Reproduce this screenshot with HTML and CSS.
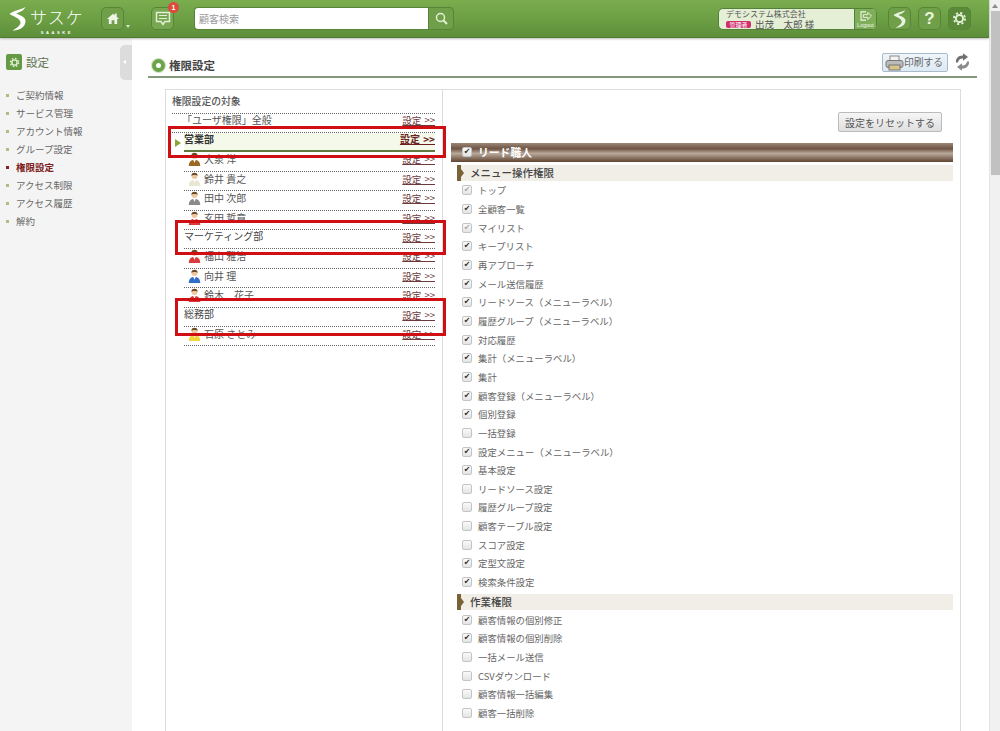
FILE: index.html
```html
<!DOCTYPE html>
<html lang="ja">
<head>
<meta charset="utf-8">
<title>権限設定</title>
<link rel="stylesheet" href="styles.css">
</head>
<body>
<svg class="defs" width="0" height="0" aria-hidden="true">
  <symbol id="person" viewBox="0 0 14 15">
    <path d="M.8 15c0-3.800 1.600-5.600 4.400-6.400h3.600c2.800.8 4.400 2.600 4.400 6.400z" fill="currentColor"/>
    <path d="M5.600 8.600h2.800L7 11.500z" fill="#fff"/>
    <circle cx="7" cy="4.300" r="3.200" fill="#f0c8a0"/>
    <path d="M3.700 4.400C3.500 1.900 5 .8 7 .8s3.500 1.100 3.300 3.600C9.500 2.900 5 2.800 3.700 4.400z" fill="#6b4a26"/>
  </symbol>
  <symbol id="mark-s" viewBox="0 0 17 24">
    <path d="M16.500 0C12 3 5 3 .5 7c4 2.500 10 4 11 8 .6 3-3.500 6-8 8.500C10 24 16.500 20 16.500 14c0-4-6-6-9.500-7.500C10.500 5 14.500 4 16.500 0z"/>
  </symbol>
  <symbol id="gear" viewBox="0 0 15 15">
    <circle cx="7.500" cy="7.500" r="3.600" fill="none" stroke="#e4f0d6" stroke-width="2"/>
    <circle cx="7.500" cy="7.500" r="5.600" fill="none" stroke="#e4f0d6" stroke-width="1.800" stroke-dasharray="2.200 2.200"/>
  </symbol>
</svg>
<div class="app">
  <div class="page">
    <header class="topbar">
      <div class="logo">
        <svg class="logo-mark" width="17" height="24"><use href="#mark-s"/></svg>
        <div class="logo-text"><span class="logo-kana">サスケ</span><span class="logo-latin">SAASKE</span></div>
      </div>
      <a class="tool tool-home">
        <svg width="14" height="13" viewBox="0 0 15 14"><path d="M1 7.500L7.500 2 9.500 3.400V1.500h2v3.700L14 7.500h-2V13H9V9H6v4H3V7.500z" fill="#eef4e6"/></svg>
      </a>
      <span class="caret"></span>
      <a class="tool tool-chat">
        <svg width="16" height="15" viewBox="0 0 16 15"><path d="M1.500 1.500h13v9H10L8 13.500 6 10.500H1.500z" fill="none" stroke="#e4f0d6" stroke-width="1.500"/><path d="M4 4.500h8M4 7.500h8" stroke="#e4f0d6" stroke-width="1.200"/></svg>
        <span class="badge">1</span>
      </a>
      <form class="search">
        <input class="search-input" type="text" placeholder="顧客検索">
        <button class="search-btn" type="button">
          <svg width="13" height="13" viewBox="0 0 13 13"><circle cx="5.500" cy="5.500" r="4" fill="none" stroke="#e4f0d6" stroke-width="1.500"/><path d="M8.500 8.500l3.500 3.500" stroke="#e4f0d6" stroke-width="2"/></svg>
        </button>
      </form>
      <div class="account">
        <div class="account-info">
          <div class="company">デモシステム株式会社</div>
          <div class="user"><span class="role">管理者</span><span>出茂　太郎 様</span></div>
        </div>
        <a class="logout">
          <svg width="14" height="11" viewBox="0 0 14 11"><path d="M7 1H1.500v9H7" fill="none" stroke="#f2f7ea" stroke-width="1.200"/><path d="M4 4h5V1.500L13 5.500 9 9.500V7H4z" fill="#7fae58" stroke="#f2f7ea" stroke-width="1"/></svg>
          <span>Logout</span>
        </a>
      </div>
      <a class="tool tool-s">
        <svg class="mark-light" width="13" height="18"><use href="#mark-s"/></svg>
      </a>
      <a class="tool tool-help">?</a>
      <a class="tool tool-gear">
        <svg width="15" height="15"><use href="#gear"/></svg>
      </a>
    </header>

    <div class="body">
      <nav class="sidebar">
        <div class="side-head">
          <span class="side-icon">
            <svg width="11" height="11"><use href="#gear"/></svg>
          </span>
          <span class="side-title">設定</span>
        </div>
        <span class="side-toggle"></span>
        <ul class="side-list">
          <li>ご契約情報</li>
          <li>サービス管理</li>
          <li>アカウント情報</li>
          <li>グループ設定</li>
          <li class="current">権限設定</li>
          <li>アクセス制限</li>
          <li>アクセス履歴</li>
          <li>解約</li>
        </ul>
      </nav>

      <main class="content">
        <div class="title-bar">
          <span class="title-dot"></span>
          <h1 class="title">権限設定</h1>
          <a class="print">
            <svg width="19" height="16" viewBox="0 0 19 16"><rect x="5" y="1" width="9" height="5" fill="#f4f4f4" stroke="#888"/><rect x="1" y="5.500" width="17" height="7" rx="2" fill="#bbb" stroke="#777"/><rect x="4" y="10" width="11" height="5" fill="#d8c48a" stroke="#777"/></svg>
            <span>印刷する</span>
          </a>
          <svg class="refresh" width="17" height="18" viewBox="0 0 17 18"><path d="M2 9.500C1.500 5 5 2.200 9 2.500V.3l5 3.700-5 3.700V5.500c-2.500-.3-4.500 1-5 4z" fill="#6f6f6f"/><path d="M15 8.500c.5 4.500-3 7.300-7 7v2.200l-5-3.700 5-3.700v2.200c2.500.3 4.500-1 5-4z" fill="#8a8a8a"/></svg>
        </div>

        <section class="panel">
          <div class="targets">
            <div class="targets-title">権限設定の対象</div>
            <ul class="target-list">
              <li class="row row-all"><span class="row-name">「ユーザ権限」全般</span><a class="set">設定 &gt;&gt;</a></li>
              <li class="row row-dept row-selected"><span class="row-name">営業部</span><a class="set">設定 &gt;&gt;</a></li>
              <li class="row row-user"><svg class="person p-brown"><use href="#person"/></svg><span class="row-name">大泉 洋</span><a class="set">設定 &gt;&gt;</a></li>
              <li class="row row-user"><svg class="person p-cream"><use href="#person"/></svg><span class="row-name">鈴井 貴之</span><a class="set">設定 &gt;&gt;</a></li>
              <li class="row row-user"><svg class="person p-gray"><use href="#person"/></svg><span class="row-name">田中 次郎</span><a class="set">設定 &gt;&gt;</a></li>
              <li class="row row-user"><svg class="person p-red"><use href="#person"/></svg><span class="row-name">玄田 哲章</span><a class="set">設定 &gt;&gt;</a></li>
              <li class="row row-dept"><span class="row-name">マーケティング部</span><a class="set">設定 &gt;&gt;</a></li>
              <li class="row row-user"><svg class="person p-red"><use href="#person"/></svg><span class="row-name">福山 雅治</span><a class="set">設定 &gt;&gt;</a></li>
              <li class="row row-user"><svg class="person p-blue"><use href="#person"/></svg><span class="row-name">向井 理</span><a class="set">設定 &gt;&gt;</a></li>
              <li class="row row-user"><svg class="person p-red"><use href="#person"/></svg><span class="row-name">鈴木　花子</span><a class="set">設定 &gt;&gt;</a></li>
              <li class="row row-dept"><span class="row-name">総務部</span><a class="set">設定 &gt;&gt;</a></li>
              <li class="row row-user"><svg class="person p-yellow"><use href="#person"/></svg><span class="row-name">石原 さとみ</span><a class="set">設定 &gt;&gt;</a></li>
            </ul>
            <span class="mark mark-1"></span>
            <span class="mark mark-2"></span>
            <span class="mark mark-3"></span>
          </div>

          <div class="perms">
            <div class="perms-actions"><button class="reset" type="button">設定をリセットする</button></div>
            <label class="role-bar"><input type="checkbox" checked><span>リード職人</span></label>
            <h2 class="group">メニュー操作権限</h2>
            <ul class="perm-list">
              <li><label><input type="checkbox" checked disabled>トップ</label></li>
              <li><label><input type="checkbox" checked>全顧客一覧</label></li>
              <li><label><input type="checkbox" checked disabled>マイリスト</label></li>
              <li><label><input type="checkbox" checked>キープリスト</label></li>
              <li><label><input type="checkbox" checked>再アプローチ</label></li>
              <li><label><input type="checkbox" checked>メール送信履歴</label></li>
              <li><label><input type="checkbox" checked>リードソース（メニューラベル）</label></li>
              <li><label><input type="checkbox" checked>履歴グループ（メニューラベル）</label></li>
              <li><label><input type="checkbox" checked>対応履歴</label></li>
              <li><label><input type="checkbox" checked>集計（メニューラベル）</label></li>
              <li><label><input type="checkbox" checked>集計</label></li>
              <li><label><input type="checkbox" checked>顧客登録（メニューラベル）</label></li>
              <li><label><input type="checkbox" checked>個別登録</label></li>
              <li><label><input type="checkbox">一括登録</label></li>
              <li><label><input type="checkbox" checked>設定メニュー（メニューラベル）</label></li>
              <li><label><input type="checkbox" checked>基本設定</label></li>
              <li><label><input type="checkbox">リードソース設定</label></li>
              <li><label><input type="checkbox">履歴グループ設定</label></li>
              <li><label><input type="checkbox">顧客テーブル設定</label></li>
              <li><label><input type="checkbox">スコア設定</label></li>
              <li><label><input type="checkbox" checked>定型文設定</label></li>
              <li><label><input type="checkbox" checked>検索条件設定</label></li>
            </ul>
            <h2 class="group">作業権限</h2>
            <ul class="perm-list">
              <li><label><input type="checkbox" checked>顧客情報の個別修正</label></li>
              <li><label><input type="checkbox" checked>顧客情報の個別削除</label></li>
              <li><label><input type="checkbox">一括メール送信</label></li>
              <li><label><input type="checkbox">CSVダウンロード</label></li>
              <li><label><input type="checkbox">顧客情報一括編集</label></li>
              <li><label><input type="checkbox">顧客一括削除</label></li>
            </ul>
          </div>
        </section>
      </main>
    </div>
  </div>
  <div class="scrollbar"><span class="scroll-up"></span><span class="scroll-thumb"></span></div>
</div>
</body>
</html>
```
FILE: styles.css
```css
* { box-sizing: border-box; }
html, body { margin: 0; padding: 0; height: 100%; overflow: hidden; }
body { background: #fff; color: #555; font-family: "Noto Sans CJK JP", "Noto Sans", sans-serif; font-size: 10px; }
ul { list-style: none; margin: 0; padding: 0; }
h1, h2 { margin: 0; }
.defs { position: absolute; }

.app { display: flex; width: 1000px; height: 731px; overflow: hidden; }
.page { width: 989px; height: 731px; display: flex; flex-direction: column; flex: none; }

/* scrollbar */
.scrollbar { width: 11px; background: #f1f1f1; border-left: 1px solid #e4e4e4; display: flex; flex-direction: column; align-items: center; }
.scroll-up { width: 0; height: 0; margin-top: 4px; border: 3px solid transparent; border-top: 0; border-bottom: 4px solid #8a8a8a; }
.scroll-thumb { width: 9px; height: 164px; margin-top: 3px; background: #c1c1c1; }

/* top bar */
.topbar { height: 38px; flex: none; display: flex; align-items: flex-start; background: linear-gradient(#7aad4e, #6a9c43 60%, #5d8e3a); border-bottom: 1px solid #4f7a30; box-shadow: 0 1px 2px #bbb; position: relative; z-index: 2; }
.logo { display: flex; width: 101px; padding: 7px 0 0 9px; height: 37px; flex: none; }
.logo-mark { flex: none; fill: #fff; }
.logo-text { display: flex; flex-direction: column; align-items: center; margin-left: 4px; }
.logo-kana { color: #fff; font-size: 17px; line-height: 20px; letter-spacing: 1px; font-weight: 300; height: 20px; }
.logo-latin { color: #fff; font-size: 4px; line-height: 4px; letter-spacing: 2.600px; font-weight: 700; margin-top: 4px; font-family: "Liberation Sans", sans-serif; }
.tool { display: flex; align-items: center; justify-content: center; width: 23px; height: 23px; margin-top: 7px; border: 1px solid #568537; border-radius: 5px; flex: none; position: relative; }
.tool-home { background: #6f9f49; }
.caret { width: 0; height: 0; margin: 25px 0 0 2px; border: 2px solid transparent; border-top: 3px solid #d8e6c8; border-bottom: 0; flex: none; }
.tool-chat { margin-left: 21px; background: #77a751; }
.badge { position: absolute; top: -6px; right: -6px; width: 11px; height: 11px; border-radius: 50%; background: #dc4b3c; color: #fff; font-size: 7px; font-weight: 700; line-height: 11px; text-align: center; font-family: "Liberation Sans", sans-serif; }
.search { display: flex; margin: 7px 0 0 20px; height: 23px; flex: none; }
.search-input { width: 234px; height: 23px; border: 1px solid #568537; border-right: 0; border-radius: 4px 0 0 4px; background: #fff; padding: 0 4px; font: 10px "Noto Sans CJK JP", sans-serif; color: #777; }
.search-input::placeholder { color: #9a9a9a; opacity: 1; }
.search-btn { width: 26px; height: 23px; border: 1px solid #568537; border-radius: 0 4px 4px 0; background: #6f9f49; padding: 0; display: flex; align-items: center; justify-content: center; }
.account { display: flex; margin: 8px 0 0 264px; width: 159px; height: 22px; flex: none; background: #e4efd6; border: 1px solid #54813a; border-radius: 5px; }
.account-info { width: 135px; padding-left: 7px; flex: none; }
.company { font-size: 8px; line-height: 10px; color: #555; }
.user { display: flex; align-items: center; font-size: 9.500px; line-height: 10px; color: #555; }
.role { display: inline-block; background: #cf2f6c; color: #fff; font-size: 6px; line-height: 7px; padding: 0 2px; border-radius: 2px; margin-right: 4px; width: 25px; text-align: center; }
.logout { flex: 1; display: flex; flex-direction: column; align-items: center; background: #7fae58; border-left: 1px solid #54813a; border-radius: 0 4px 4px 0; padding-top: 2px; color: #eef5e4; font-size: 5.500px; line-height: 8px; font-family: "Liberation Sans", sans-serif; }
.mark-light { fill: #eaf3df; }
.tool-s { margin-left: 11px; background: #6f9f49; }
.tool-help { margin-left: 7px; background: #6f9f49; color: #eaf3df; font: 700 17px "Liberation Sans", sans-serif; }
.tool-gear { margin-left: 7px; background: #5a8a39; }

/* layout below bar */
.body { flex: 1; display: flex; min-height: 0; }

/* sidebar */
.sidebar { width: 132px; flex: none; background: #f4f4f4; position: relative; padding-top: 16px; }
.side-head { display: flex; align-items: center; padding-left: 6px; height: 16px; }
.side-icon { width: 16px; height: 16px; background: #659a45; border-radius: 2px; display: flex; align-items: center; justify-content: center; }
.side-title { margin-left: 4px; font-size: 11.500px; color: #5d7350; }
.side-toggle { position: absolute; top: 7px; right: 0; width: 12px; height: 35px; background: #dcdcdc; border-radius: 5px 0 0 5px; }
.side-toggle::after { content: ""; position: absolute; left: 3px; top: 15px; border: 2.500px solid transparent; border-left: 0; border-right: 3.500px solid #fff; }
.side-list { margin-top: 16px; }
.side-list li { height: 18px; line-height: 18px; padding-left: 16px; font-size: 9.500px; color: #666; position: relative; }
.side-list li::before { content: ""; position: absolute; left: 6px; top: 8px; width: 3px; height: 3px; background: #a9c07f; }
.side-list li.current { color: #7f2020; font-weight: 700; }
.side-list li.current::before { background: #8a1f2a; }

/* content */
.content { flex: 1; padding: 0 12px 0 16px; min-width: 0; }
.title-bar { height: 40px; display: flex; align-items: flex-end; border-bottom: 2px solid #84997a; padding: 0 6px 3px 3px; position: relative; }
.title-dot { width: 13px; height: 13px; border-radius: 50%; border: 4px solid #6da34a; background: #fff; box-shadow: 0 0 0 1px #cfe0bf; margin: 0 5px 1px 1px; }
.title { font-size: 11.500px; font-weight: 700; line-height: 15px; color: #444; flex: 1; margin-left: -1px; }
.print { display: flex; align-items: center; width: 66px; height: 19px; padding-left: 2px; background: linear-gradient(#eef5fb, #dde9f3); border: 1px solid #aabccb; border-radius: 2px; color: #666; font-size: 9.750px; line-height: 15px; position: absolute; right: 29px; top: 15px; }
.print span { margin-bottom: 1px; }
.refresh { position: absolute; right: 6px; top: 15px; }

/* panel */
.panel { margin: 11px 16px 0 17px; height: 700px; display: flex; border: 1px solid #dcdcdc; }
.targets { width: 277px; flex: none; border-right: 1px solid #dcdcdc; position: relative; }
.targets-title { height: 23px; padding: 4px 0 0 6px; font-size: 9.800px; font-weight: 500; line-height: 14px; color: #555; }
.row { display: flex; height: 19.400px; margin: 0 7px 0 18px; border-bottom: 1px dotted #666; font-size: 10px; line-height: 14px; color: #555; position: relative; }
.row-name { flex: 1; }
.set { color: #6c3a3a; text-decoration: underline; font-size: 9.500px; word-spacing: 1px; }
.row-all { margin-left: 6px; border-top: 1px dotted #666; padding-left: 10px; height: 20px; line-height: 12px; }
.row-user { padding-left: 20px; }
.row-dept { color: #444; }
.row-dept .row-name { line-height: 12px; }
.row-selected { background: #f5f9ea; border-bottom: 2px solid #62793f; color: #333; line-height: 12px; }
.row-selected .row-name { font-weight: 600; line-height: 11px; }
.row-selected .set { font-weight: 700; font-size: 10px; color: #6b1f1f; margin-top: -1px; line-height: 14px; }
.row-selected::before { content: ""; position: absolute; left: -9px; top: 6px; border: 4px solid transparent; border-right: 0; border-left: 6px solid #8aa538; }
.person { position: absolute; left: 4px; top: 0; width: 13px; height: 14px; }
.p-brown { color: #9a6a22; }
.p-cream { color: #e9e6d2; }
.p-gray { color: #8a8a8a; }
.p-red { color: #d83c3c; }
.p-blue { color: #2f6fc9; }
.p-yellow { color: #f1d53c; }

/* red annotations */
.mark { position: absolute; border: 3px solid #d00f14; pointer-events: none; }
.mark-1 { left: 2px; top: 36px; width: 278px; height: 32px; }
.mark-2 { left: 9px; top: 130px; width: 271px; height: 35px; }
.mark-3 { left: 9px; top: 208px; width: 271px; height: 38px; }

/* permissions */
.perms { flex: 1; padding: 0 7px 0 7px; min-width: 0; }
.perms-actions { display: flex; justify-content: flex-end; padding: 22px 11px 0 0; }
.reset { width: 104px; height: 20px; padding: 0; background: linear-gradient(#f6f6f6, #dfdfdf); border: 1px solid #bbb; border-radius: 2px; color: #555; font: 10px "Noto Sans CJK JP", sans-serif; }
.role-bar { display: flex; align-items: center; height: 19px; margin: 11px 0 0 1px; padding: 0 0 2px 11px; background: linear-gradient(#9b8878, #6f5443 30%, #b9a99b 55%, #5f4330); color: #fff; font-size: 10.800px; font-weight: 700; }
.role-bar input { margin-right: 6px; }
.group { height: 16px; margin: 3px 0 0 7px; padding-left: 9px; background: #f1eee8; border-left: 4px solid #7a6236; font-size: 10.500px; font-weight: 500; line-height: 16px; color: #444; position: relative; }
.group::before { content: ""; position: absolute; left: 0; top: 4px; border: 4px solid transparent; border-right: 0; border-left: 3px solid #7a6236; }
.perm-list li { height: 18.670px; }
.perm-list label { display: flex; align-items: center; height: 100%; padding-left: 12px; font-size: 9.400px; color: #666; }
input[type="checkbox"] { appearance: none; -webkit-appearance: none; width: 10px; height: 10px; margin: 0 6px 0 0; flex: none; background: linear-gradient(#fafafa, #e4e4e4); border: 1px solid #c4c4c4; border-radius: 2px; position: relative; display: block; }
input[type="checkbox"]:checked::after { content: "\2714"; position: absolute; left: 0; top: 0; width: 8px; height: 8px; font: 8px/8px "DejaVu Sans", sans-serif; text-align: center; color: #333; }
input[type="checkbox"]:disabled::after { color: #aaa; }
```
